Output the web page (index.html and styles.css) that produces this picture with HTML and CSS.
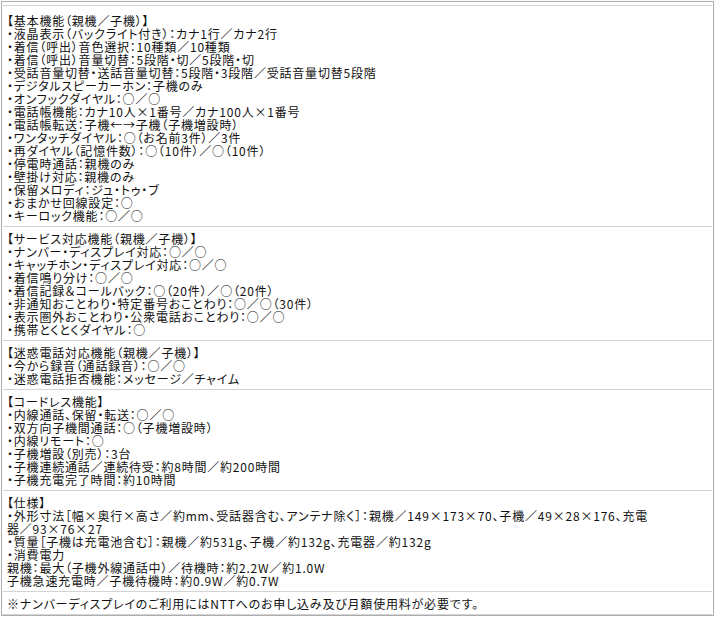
FILE: index.html
```html
<!DOCTYPE html>
<html lang="ja">
  <head>
    <meta charset="UTF-8" />
    <meta name="viewport" content="width=device-width, initial-scale=1.0" />
    <title>仕様・機能</title>
    <link rel="stylesheet" href="styles.css">
  </head>
  <body>
    <div class="spec">
      <div class="cell first">
        【基本機能（親機／子機）】<br />
        ・液晶表示（バックライト付き）：カナ1行／カナ2行<br />
        ・着信（呼出）音色選択：10種類／10種類<br />
        ・着信（呼出）音量切替：5段階・切／5段階・切<br />
        ・受話音量切替・送話音量切替：5段階・3段階／受話音量切替5段階<br />
        ・デジタルスピーカーホン：子機のみ<br />
        ・オンフックダイヤル：○／○<br />
        ・電話帳機能：カナ10人×1番号／カナ100人×1番号<br />
        ・電話帳転送：子機←→子機（子機増設時）<br />
        ・ワンタッチダイヤル：○（お名前3件）／3件<br />
        ・再ダイヤル（記憶件数）：○（10件）／○（10件）<br />
        ・停電時通話：親機のみ<br />
        ・壁掛け対応：親機のみ<br />
        ・保留メロディ：ジュ・トゥ・ブ<br />
        ・おまかせ回線設定：○<br />
        ・キーロック機能：○／○
      </div>
      <div class="cell">
        【サービス対応機能（親機／子機）】<br />
        ・ナンバー・ディスプレイ対応：○／○<br />
        ・キャッチホン・ディスプレイ対応：○／○<br />
        ・着信鳴り分け：○／○<br />
        ・着信記録＆コールバック：○（20件）／○（20件）<br />
        ・非通知おことわり・特定番号おことわり：○／○（30件）<br />
        ・表示圏外おことわり・公衆電話おことわり：○／○<br />
        ・携帯とくとくダイヤル：○
      </div>
      <div class="cell">
        【迷惑電話対応機能（親機／子機）】<br />
        ・今から録音（通話録音）：○／○<br />
        ・迷惑電話拒否機能：メッセージ／チャイム
      </div>
      <div class="cell">
        【コードレス機能】<br />
        ・内線通話、保留・転送：○／○<br />
        ・双方向子機間通話：○（子機増設時）<br />
        ・内線リモート：○<br />
        ・子機増設（別売）：3台<br />
        ・子機連続通話／連続待受：約8時間／約200時間<br />
        ・子機充電完了時間：約10時間
      </div>
      <div class="cell">
        【仕様】<br />
        ・外形寸法［幅×奥行×高さ／約mm、受話器含む、アンテナ除く］：親機／149×173×70、子機／49×28×176、充電<br />器／93×76×27<br />
        ・質量［子機は充電池含む］：親機／約531g、子機／約132g、充電器／約132g<br />
        ・消費電力<br />
        親機：最大（子機外線通話中）／待機時：約2.2W／約1.0W<br />
        子機急速充電時／子機待機時：約0.9W／約0.7W
      </div>
      <div class="cell">
        ※ナンバーディスプレイのご利用にはNTTへのお申し込み及び月額使用料が必要です。
      </div>
    </div>
  </body>
</html>
```

FILE: styles.css
```css
body {
  margin: 0;
  padding: 1px 2px 0 1px;
  background-color: #ffffff;
  font-family: "Noto Sans CJK JP", "Noto Sans", sans-serif;
  font-size: 12px;
  line-height: 13px;
  letter-spacing: 0.8px;
  color: #111;
  font-feature-settings: "palt";
}
.spec {
  border: 1px solid #adadad;
  padding: 3px 1px 0;
}
.cell {
  border-top: 1px solid #d4d4d4;
  padding: 5px 4px 4px;
}
.cell.first {
  padding-top: 8px;
}
.cell:last-child {
  border-bottom: 1px solid #d4d4d4;
}
```
